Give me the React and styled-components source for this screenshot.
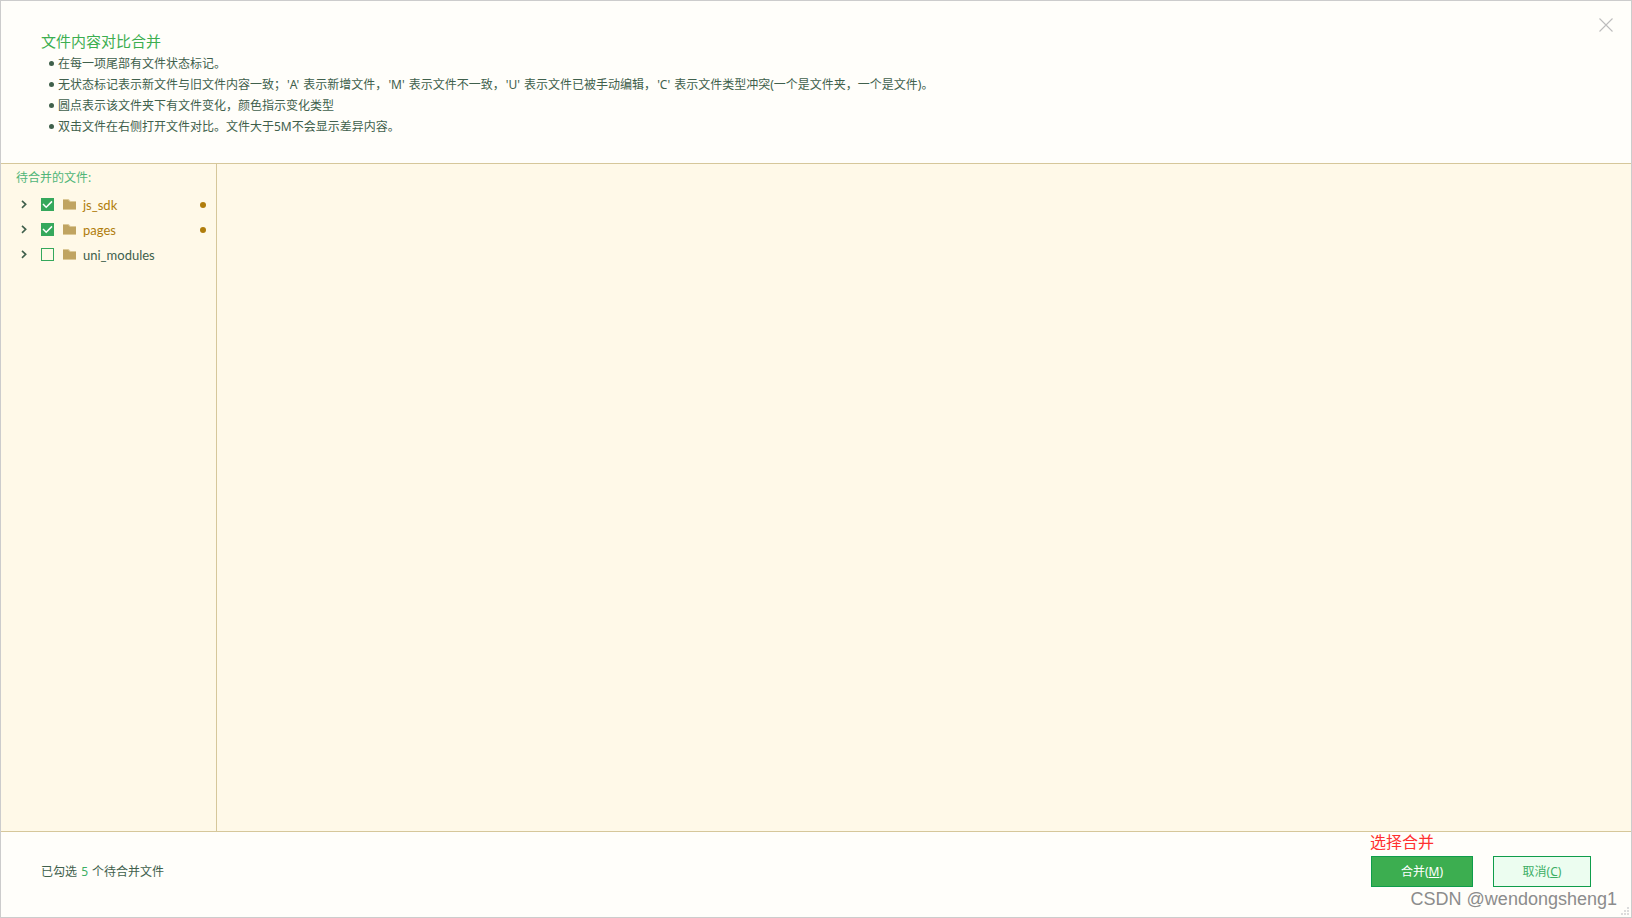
import React, { useState } from "react";
import styled, { createGlobalStyle } from "styled-components";

const GlobalStyle = createGlobalStyle`
  *, *::before, *::after { box-sizing: border-box; }
  body {
    margin: 0;
    background: #fffefa;
    color: #40604c;
    font-family: "Noto Sans", "Noto Sans CJK SC", sans-serif;
    font-size: 12px;
    line-height: 21px;
  }
  button, input { font: inherit; }
`;

const Dialog = styled.main`
  position: relative;
  display: flex;
  flex-direction: column;
  min-height: 100vh;
  border: 1px solid #cccccc;
  background: #fffefa;
`;

const Header = styled.header`
  display: flex;
  justify-content: space-between;
  align-items: flex-start;
  padding: 17px 18px 26px 40px;
  border-bottom: 1px solid #d6c79a;
`;

const Intro = styled.div`
  padding-top: 12px;
`;

const Title = styled.h1`
  margin: 0;
  font-size: 15px;
  font-weight: 400;
  line-height: 23px;
  color: #3cae50;
`;

const Notes = styled.ul`
  margin: 0;
  padding: 0 0 0 8px;
  list-style: none;
`;

const Note = styled.li`
  display: flex;
  align-items: center;
  gap: 4px;

  &::before {
    content: "";
    flex: none;
    width: 5px;
    height: 5px;
    border-radius: 50%;
    background: #40604c;
  }
`;

const Mark = styled.span`
  margin: 0 1px;
`;

const CloseButton = styled.button`
  display: flex;
  padding: 0;
  border: 0;
  background: none;
  color: #bdbdbd;
  cursor: pointer;
`;

const Body = styled.div`
  flex: 1;
  display: flex;
  background: #fff9e8;
`;

const Sidebar = styled.aside`
  width: 216px;
  flex: none;
  padding: 3px 8px 0 15px;
  border-right: 1px solid #d6c79a;
`;

const DiffPane = styled.section`
  flex: 1;
`;

const SidebarTitle = styled.h2`
  margin: 0 0 4px;
  font-size: 12px;
  font-weight: 400;
  line-height: 21px;
  color: #4fb578;
`;

const Tree = styled.ul`
  margin: 0;
  padding: 0;
  list-style: none;
`;

const Row = styled.li`
  display: flex;
  align-items: center;
  height: 25px;
  padding: 0 2px 0 4px;
  color: ${(p) => (p.$changed ? "#b07d0c" : "#40604c")};
`;

const Toggle = styled.button`
  display: flex;
  margin-right: 13px;
  padding: 0;
  border: 0;
  background: none;
  color: #40604c;
  cursor: pointer;
`;

const CheckBox = styled.span`
  display: grid;
  margin-right: 9px;

  > * { grid-area: 1 / 1; }
  > svg { pointer-events: none; }
`;

const CheckInput = styled.input`
  appearance: none;
  width: 13px;
  height: 13px;
  margin: 0;
  border: 1px solid #35a85c;

  &:checked { background: #35a85c; }
`;

const FileLabel = styled.label`
  flex: 1;
  display: flex;
  align-items: center;
  gap: 7px;
  font-family: Lato, "Noto Sans CJK SC", sans-serif;
  font-size: 13px;
  line-height: 20px;
`;

const ChangeDot = styled.span`
  width: 6px;
  height: 6px;
  border-radius: 50%;
  background: #b07d0c;
`;

const Footer = styled.footer`
  display: flex;
  justify-content: space-between;
  align-items: center;
  padding: 24px 40px 30px;
  border-top: 1px solid #d6c79a;
`;

const Summary = styled.p`
  margin: 0;
`;

const Count = styled.span`
  margin: 0 1px;
  color: #3cae64;
`;

const Actions = styled.div`
  position: relative;
  display: flex;
  gap: 20px;
`;

const ActionButton = styled.button`
  min-width: ${(p) => (p.$primary ? 102 : 98)}px;
  height: 31px;
  padding: 0 16px;
  border: 1px solid #0f9d4b;
  background: ${(p) => (p.$primary ? "#3cae50" : "#ecfdf0")};
  color: ${(p) => (p.$primary ? "#ffffff" : "#3cae64")};
  cursor: pointer;
`;

const Hint = styled.span`
  position: absolute;
  left: -1px;
  bottom: 33px;
  font-size: 16px;
  line-height: 24px;
  color: #ff3030;
`;

const Watermark = styled.span`
  position: absolute;
  right: 14px;
  bottom: 7px;
  font-family: "Liberation Sans", sans-serif;
  font-size: 18px;
  line-height: 22px;
  color: #8c8c8c;
`;

const Grip = styled.svg`
  position: absolute;
  right: 2px;
  bottom: 2px;
`;

const notes = [
  <>在每一项尾部有文件状态标记。</>,
  <>
    无状态标记表示新文件与旧文件内容一致；<Mark>'A'</Mark> 表示新增文件，<Mark>'M'</Mark>{" "}
    表示文件不一致，<Mark>'U'</Mark> 表示文件已被手动编辑，<Mark>'C'</Mark>{" "}
    表示文件类型冲突(一个是文件夹，一个是文件)。
  </>,
  <>圆点表示该文件夹下有文件变化，颜色指示变化类型</>,
  <>双击文件在右侧打开文件对比。文件大于5M不会显示差异内容。</>,
];

const folders = [
  { name: "js_sdk", changed: true },
  { name: "pages", changed: true },
  { name: "uni_modules", changed: false },
];

function FolderRow({ name, changed }) {
  const [checked, setChecked] = useState(changed);
  return (
    <Row $changed={changed}>
      <Toggle aria-label={`展开 ${name}`}>
        <svg width="8" height="11" viewBox="0 0 8 11" fill="none" stroke="currentColor" strokeWidth="1.6">
          <path d="M2 1.8 5.7 5.3 2 8.8" />
        </svg>
      </Toggle>
      <CheckBox>
        <CheckInput
          type="checkbox"
          id={name}
          checked={checked}
          onChange={(e) => setChecked(e.target.checked)}
        />
        {checked && (
          <svg width="13" height="13" viewBox="0 0 13 13" fill="none" stroke="#fff" strokeWidth="1.5">
            <path d="M2 6 5.2 9.2 11 3.4" />
          </svg>
        )}
      </CheckBox>
      <FileLabel htmlFor={name}>
        <svg width="13" height="11" viewBox="0 0 13 11">
          <path d="M0 0H5.5L7.5 2H13V11H0Z" fill="#dcc998" />
          <path d="M0 1H5L7 3H13V10H0Z" fill="#c0a461" />
        </svg>
        <span>{name}</span>
      </FileLabel>
      {changed && <ChangeDot />}
    </Row>
  );
}

export default function App() {
  return (
    <>
      <GlobalStyle />
      <Dialog>
        <Header>
          <Intro>
            <Title>文件内容对比合并</Title>
            <Notes>
              {notes.map((note, i) => (
                <Note key={i}>
                  <span>{note}</span>
                </Note>
              ))}
            </Notes>
          </Intro>
          <CloseButton aria-label="关闭">
            <svg width="14" height="14" viewBox="0 0 14 14" stroke="currentColor" strokeWidth="1.1">
              <path d="M.5 .5 13.5 13.5M13.5 .5 .5 13.5" />
            </svg>
          </CloseButton>
        </Header>
        <Body>
          <Sidebar>
            <SidebarTitle>待合并的文件:</SidebarTitle>
            <Tree>
              {folders.map((f) => (
                <FolderRow key={f.name} {...f} />
              ))}
            </Tree>
          </Sidebar>
          <DiffPane />
        </Body>
        <Footer>
          <Summary>
            已勾选 <Count>5</Count> 个待合并文件
          </Summary>
          <Actions>
            <Hint>选择合并</Hint>
            <ActionButton $primary>
              合并(<u>M</u>)
            </ActionButton>
            <ActionButton>
              取消(<u>C</u>)
            </ActionButton>
          </Actions>
        </Footer>
        <Watermark>CSDN @wendongsheng1</Watermark>
        <Grip width="8" height="8" viewBox="0 0 8 8" fill="#dcdcdc" aria-hidden="true">
          <path d="M6 0h2v2H6zM3 3h2v2H3zM6 3h2v2H6zM0 6h2v2H0zM3 6h2v2H3zM6 6h2v2H6z" />
        </Grip>
      </Dialog>
    </>
  );
}
